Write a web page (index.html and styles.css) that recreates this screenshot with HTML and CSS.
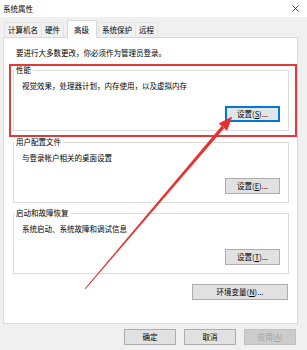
FILE: index.html
```html
<!DOCTYPE html>
<html lang="zh-CN">
<head>
<meta charset="utf-8">
<title>系统属性</title>
<link rel="stylesheet" href="styles.css">
</head>
<body>
<div class="dialog">
  <div class="titlebar">
    <span class="title">系统属性</span>
    <svg class="close" viewBox="0 0 7 7" width="7" height="7"><path d="M0.5 0.5L6.5 6.5M6.5 0.5L0.5 6.5" stroke="#333" stroke-width="0.9" fill="none"/></svg>
  </div>
  <div class="main">
    <div class="tabs">
      <div class="tab">计算机名</div>
      <div class="tab">硬件</div>
      <div class="tab active">高级</div>
      <div class="tab">系统保护</div>
      <div class="tab">远程</div>
    </div>
    <div class="panel">
      <p class="note">要进行大多数更改，你必须作为管理员登录。</p>
      <fieldset class="group">
        <legend>性能</legend>
        <div class="group-body">
          <p class="desc">视觉效果，处理器计划，内存使用，以及虚拟内存</p>
          <div class="actions"><button class="btn focus">设置(<u>S</u>)...</button></div>
        </div>
      </fieldset>
      <fieldset class="group g2">
        <legend>用户配置文件</legend>
        <div class="group-body">
          <p class="desc">与登录帐户相关的桌面设置</p>
          <div class="actions"><button class="btn">设置(<u>E</u>)...</button></div>
        </div>
      </fieldset>
      <fieldset class="group g3">
        <legend>启动和故障恢复</legend>
        <div class="group-body">
          <p class="desc">系统启动、系统故障和调试信息</p>
          <div class="actions"><button class="btn">设置(<u>T</u>)...</button></div>
        </div>
      </fieldset>
      <div class="env-row"><button class="btn wide">环境变量(<u>N</u>)...</button></div>
    </div>
    <div class="footer">
      <button class="btn foot">确定</button>
      <button class="btn foot">取消</button>
      <button class="btn foot disabled">应用(<u>A</u>)</button>
    </div>
  </div>
  <div class="highlight"></div>
  <svg class="arrow" viewBox="0 0 307 350" width="307" height="350">
    <polygon points="84.6,288.7 85.4,289.3 224.2,128.2 221.6,126.0" fill="#e8312f"/>
    <polygon points="232.2,116.5 227.1,130.7 218.7,123.5" fill="#e8312f"/>
  </svg>
</div>
</body>
</html>
```

FILE: styles.css
```css
* { box-sizing: border-box; }
html, body { margin: 0; padding: 0; }
body {
  width: 307px;
  height: 350px;
  overflow: hidden;
  background: #f0f0f0;
  font-family: "Noto Sans CJK SC", "Microsoft YaHei", sans-serif;
  font-size: 7.5px;
  line-height: 10px;
  color: #000;
}
.dialog {
  position: relative;
  width: 307px;
  height: 350px;
  background: #f0f0f0;
}
.titlebar {
  height: 17px;
  background: #fff;
  display: flex;
  align-items: center;
  justify-content: space-between;
  padding: 0 8px 0 3px;
}
.close { display: block; }
.tabs {
  display: flex;
  align-items: flex-end;
  height: 20px;
  padding-left: 4px;
}
.tab {
  height: 15px;
  line-height: 14px;
  padding: 0 3px;
  border: 1px solid #e3e3e3;
  border-bottom: none;
  margin-right: -1px;
  background: #f0f0f0;
}
.tab.active {
  position: relative;
  z-index: 1;
  height: 18px;
  line-height: 17px;
  margin: 0 1px -1px 4px;
  padding: 0 7px 0 6px;
  background: #fff;
  border-color: #d9d9d9;
}
.panel {
  width: 295px;
  height: 287px;
  margin-left: 3px;
  background: #fff;
  border: 1px solid #d9d9d9;
  padding: 10px 8px 0 9px;
}
.note { margin: 0 0 0 3px; }
.group {
  margin: 7px 0 0;
  padding: 0;
  min-width: 0;
  border: 1px solid #dcdcdc;
}
.group.g2 { margin-top: 6px; }
.group.g3 { margin-top: 5px; }
.group legend {
  padding: 0 2px;
  margin-left: 0;
  line-height: 10px;
}
.group-body { padding: 0 8px 8px 8px; }
.desc { margin: 6px 0 0; }
.actions {
  display: flex;
  justify-content: flex-end;
  margin-top: 15px;
}
.btn {
  height: 16px;
  width: 55px;
  padding: 0;
  font-family: inherit;
  font-size: 7.5px;
  line-height: 14px;
  color: #000;
  background: #e1e1e1;
  border: 1px solid #adadad;
  border-radius: 0;
}
.btn u { text-decoration: underline; }
.btn.focus {
  border-color: #0078d7;
  box-shadow: inset 0 0 0 1px #0078d7;
  background: #e1e4e8;
}
.btn.wide { width: 96px; }
.env-row {
  display: flex;
  justify-content: flex-end;
  margin-top: 10px;
  padding-right: 1px;
}
.footer {
  display: flex;
  justify-content: flex-end;
  gap: 8px;
  margin-top: 5px;
  padding-right: 11px;
}
.btn.foot { width: 52px; }
.btn.disabled {
  color: #a0a0a0;
  background: #cccccc;
  border-color: #bfbfbf;
}
.highlight {
  position: absolute;
  left: 9px;
  top: 64px;
  width: 288px;
  height: 73px;
  border: 2px solid #e23b3b;
}
.arrow {
  position: absolute;
  left: 0;
  top: 0;
  pointer-events: none;
}
```
